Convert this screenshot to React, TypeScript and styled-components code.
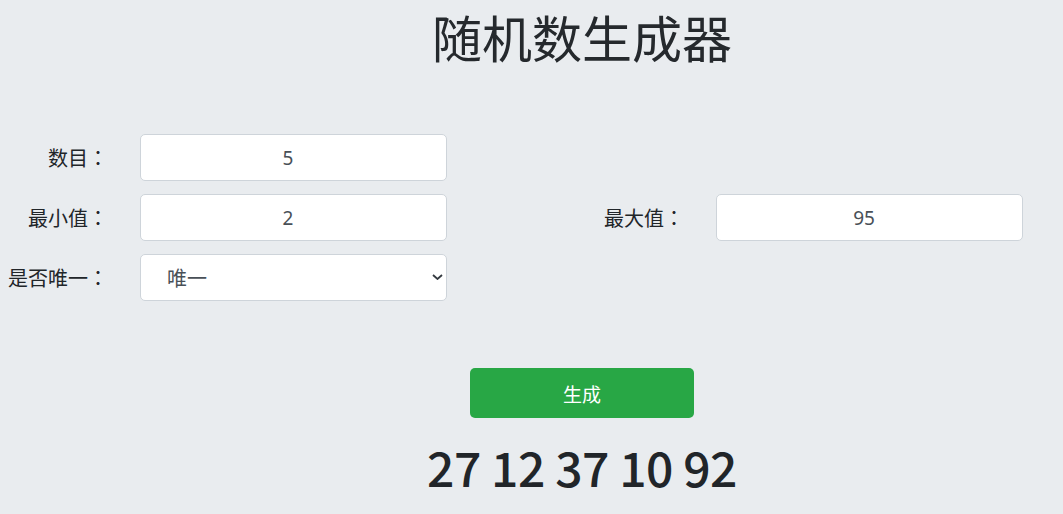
import * as React from 'react'
import styled, { createGlobalStyle } from 'styled-components'

const GlobalStyle = createGlobalStyle`
    html, body {
        margin: 0;
        padding: 0;
        background: #e9ecef;
    }
    body {
        font-family: "Noto Sans CJK SC", "Noto Sans", sans-serif;
        color: #212529;
    }
`

const Page = styled.div`
    width: 1063px;
    min-height: 514px;
    background: #e9ecef;
`

const Centered = styled.div`
    padding-left: 101px;
    display: flex;
    flex-direction: column;
    align-items: center;
`

const Title = styled.h1`
    margin: 6px 0 0;
    font-size: 50px;
    line-height: 60px;
    font-weight: 400;
    color: #25292d;
`

const Form = styled.div`
    margin-top: 68px;
    display: grid;
    grid-template-columns: 108px 307px 205px 307px;
    column-gap: 32px;
    row-gap: 13px;
`

const Spacer = styled.div`
    grid-column: span 2;
`

const Label = styled.label`
    display: flex;
    align-items: center;
    justify-content: flex-end;
    font-size: 20px;
    white-space: nowrap;
    color: #212529;
`

const Colon = styled.span`
    display: inline-block;
    width: 20px;
    text-align: center;
    font-family: "Noto Sans CJK TC", sans-serif;
`

const Input = styled.input`
    box-sizing: border-box;
    width: 307px;
    height: 47px;
    padding: 0 27px 0 16px;
    border: 1px solid #ced4da;
    border-radius: 5px;
    background: #fff;
    font-family: "Noto Sans", "Noto Sans CJK SC", sans-serif;
    font-size: 19px;
    color: #495057;
    text-align: center;
    outline: none;
`

const SelectWrap = styled.div`
    position: relative;
    width: 307px;
    height: 47px;
`

const Select = styled.select`
    box-sizing: border-box;
    width: 100%;
    height: 100%;
    padding: 0 40px 0 26px;
    appearance: none;
    border: 1px solid #ced4da;
    border-radius: 5px;
    background: #fff;
    font-family: "Noto Sans CJK SC", sans-serif;
    font-size: 20px;
    color: #495057;
    outline: none;
`

const Chevron = styled.svg`
    position: absolute;
    right: 4px;
    top: 20px;
    width: 11px;
    height: 6px;
    pointer-events: none;
`

const GenerateButton = styled.button`
    margin-top: 67px;
    width: 224px;
    height: 50px;
    border: none;
    border-radius: 5px;
    background: #28a745;
    color: #fff;
    font-family: "Noto Sans CJK SC", sans-serif;
    font-size: 19px;
    cursor: pointer;
`

const Result = styled.div`
    margin-top: 18px;
    font-family: "Noto Sans CJK SC", sans-serif;
    font-size: 48px;
    font-weight: 500;
    line-height: 60px;
    letter-spacing: -0.5px;
    color: #212529;
`

const LabelText = ({ text }: { text: string }) => (
    <>
        {text}
        <Colon>：</Colon>
    </>
)

export default function App() {
    const [count, setCount] = React.useState('5')
    const [min, setMin] = React.useState('2')
    const [max, setMax] = React.useState('95')
    const [unique, setUnique] = React.useState('1')
    const [numbers] = React.useState([27, 12, 37, 10, 92])

    return (
        <Page>
            <GlobalStyle/>
            <Centered>
                <Title>随机数生成器</Title>
            </Centered>
            <Form>
                <Label><LabelText text="数目"/></Label>
                <Input value={count} onChange={e => setCount(e.target.value)}/>
                <Spacer/>
                <Label><LabelText text="最小值"/></Label>
                <Input value={min} onChange={e => setMin(e.target.value)}/>
                <Label><LabelText text="最大值"/></Label>
                <Input value={max} onChange={e => setMax(e.target.value)}/>
                <Label><LabelText text="是否唯一"/></Label>
                <SelectWrap>
                    <Select value={unique} onChange={e => setUnique(e.target.value)}>
                        <option value="1">唯一</option>
                        <option value="0">不唯一</option>
                    </Select>
                    <Chevron viewBox="0 0 11 6">
                        <path d="M1 1l4.5 4 4.5-4" fill="none" stroke="#343a40" strokeWidth="1.8"/>
                    </Chevron>
                </SelectWrap>
                <Spacer/>
            </Form>
            <Centered>
                <GenerateButton>生成</GenerateButton>
                <Result>{numbers.join(' ')}</Result>
            </Centered>
        </Page>
    )
}
